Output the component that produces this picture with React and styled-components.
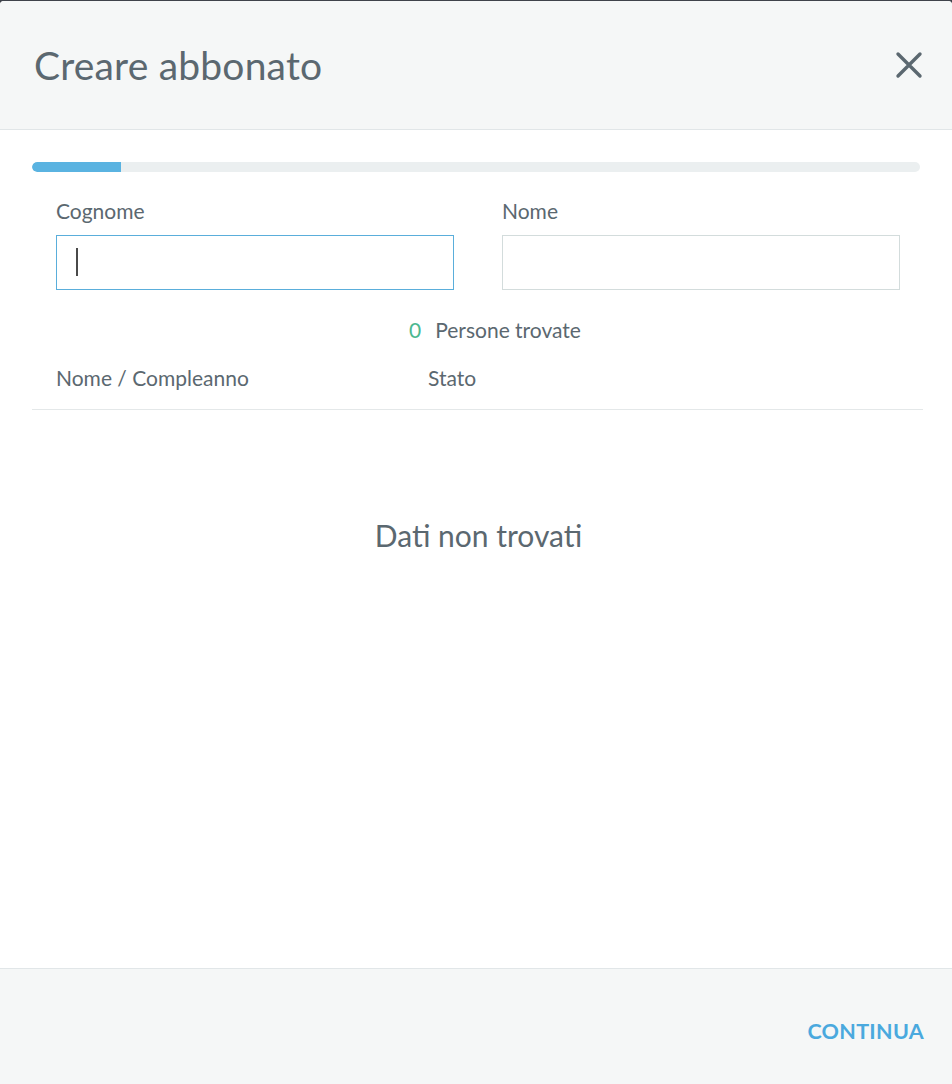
import React from 'react';
import styled, { createGlobalStyle } from 'styled-components';

const GlobalStyle = createGlobalStyle`
  html, body {
    margin: 0;
    padding: 0;
    background: #3f434b;
  }
  * { box-sizing: border-box; }
`;

const Modal = styled.div`
  margin-top: 1px;
  width: 952px;
  height: 1083px;
  background: #ffffff;
  border-radius: 4px 4px 0 0;
  overflow: hidden;
  display: flex;
  flex-direction: column;
  font-family: Lato, "Noto Sans", sans-serif;
  color: #5b6870;
`;

const Header = styled.div`
  height: 129px;
  flex: none;
  background: #f5f7f7;
  border-bottom: 1px solid #e1e6e8;
  display: flex;
  align-items: center;
  justify-content: space-between;
  padding: 0 27px 0 34px;
`;

const Title = styled.h2`
  margin: 0;
  font-weight: 400;
  font-size: 39px;
  color: #5b6870;
  letter-spacing: 0.2px;
`;

const CloseButton = styled.button`
  border: 0;
  background: none;
  padding: 0;
  width: 32px;
  height: 32px;
  display: grid;
  place-items: center;
  cursor: pointer;
`;

const Body = styled.div`
  flex: 1;
  padding: 32px 29px 0 32px;
  display: flex;
  flex-direction: column;
`;

const Progress = styled.div`
  height: 10px;
  margin-right: 3px;
  border-radius: 5px;
  background: #ebeff0;
  overflow: hidden;
`;

const ProgressFill = styled.div`
  height: 100%;
  background: #5ab3e1;
  border-radius: 5px 0 0 5px;
`;

const Fields = styled.div`
  display: grid;
  grid-template-columns: 398px 398px;
  column-gap: 48px;
  padding: 0 0 0 24px;
  margin-top: 27px;
`;

const Field = styled.label`
  display: flex;
  flex-direction: column;
  gap: 12px;
`;

const Label = styled.span`
  font-size: 21px;
  line-height: 24px;
  color: #5b6870;
`;

const InputWrap = styled.div`
  position: relative;
`;

const Input = styled.input`
  display: block;
  width: 100%;
  height: 55px;
  border: 1px solid ${p => (p.$active ? '#5aaedb' : '#d3dcdc')};
  background: #fff;
  padding: 0 20px;
  font-family: inherit;
  font-size: 20px;
  color: #4a555c;
  outline: none;
  caret-color: transparent;

  &:focus {
    border-color: #5aaedb;
  }
`;

const Caret = styled.span`
  position: absolute;
  left: 20px;
  top: 13px;
  width: 2px;
  height: 28px;
  background: #4a4a4a;
  pointer-events: none;
`;

const Count = styled.div`
  margin-top: 28px;
  padding-left: 377px;
  font-size: 21px;
  line-height: 24px;
  display: flex;
  gap: 14px;
`;

const CountNumber = styled.span`
  color: #4cb890;
`;

const TableHead = styled.div`
  margin-top: 24px;
  display: grid;
  grid-template-columns: 372px 1fr;
  padding: 0 0 19px 24px;
  border-bottom: 1px solid #e4e8e9;
  font-size: 21px;
  line-height: 24px;
`;

const Empty = styled.div`
  margin-top: 108px;
  text-align: center;
  font-size: 30px;
  line-height: 34px;
  color: #5b6870;
  padding-left: 2px;
`;

const Footer = styled.div`
  height: 116px;
  flex: none;
  background: #f5f7f7;
  border-top: 1px solid #e1e6e8;
  display: flex;
  align-items: center;
  justify-content: flex-end;
  padding: 8px 28px 0 0;
`;

const ActionButton = styled.button`
  border: 0;
  background: none;
  padding: 0;
  font-family: Lato, "Noto Sans", sans-serif;
  font-weight: 700;
  font-size: 21.5px;
  letter-spacing: 0.3px;
  color: #4aa9de;
  cursor: pointer;
`;

function CloseIcon() {
  return (
    <svg width="28" height="28" viewBox="0 0 28 28">
      <path d="M3 3 L25 25 M25 3 L3 25" stroke="#5b6870" strokeWidth="3.4" strokeLinecap="round" />
    </svg>
  );
}

export default function App() {
  const step = 0.1;
  return (
    <>
      <GlobalStyle />
      <Modal>
        <Header>
          <Title>Creare abbonato</Title>
          <CloseButton aria-label="Chiudi">
            <CloseIcon />
          </CloseButton>
        </Header>
        <Body>
          <Progress>
            <ProgressFill style={{ width: `${step * 100}%` }} />
          </Progress>
          <Fields>
            <Field>
              <Label>Cognome</Label>
              <InputWrap>
                <Input $active />
                <Caret />
              </InputWrap>
            </Field>
            <Field>
              <Label>Nome</Label>
              <InputWrap>
                <Input />
              </InputWrap>
            </Field>
          </Fields>
          <Count>
            <CountNumber>0</CountNumber>
            <span>Persone trovate</span>
          </Count>
          <TableHead>
            <span>Nome / Compleanno</span>
            <span>Stato</span>
          </TableHead>
          <Empty>Dati non trovati</Empty>
        </Body>
        <Footer>
          <ActionButton>CONTINUA</ActionButton>
        </Footer>
      </Modal>
    </>
  );
}
